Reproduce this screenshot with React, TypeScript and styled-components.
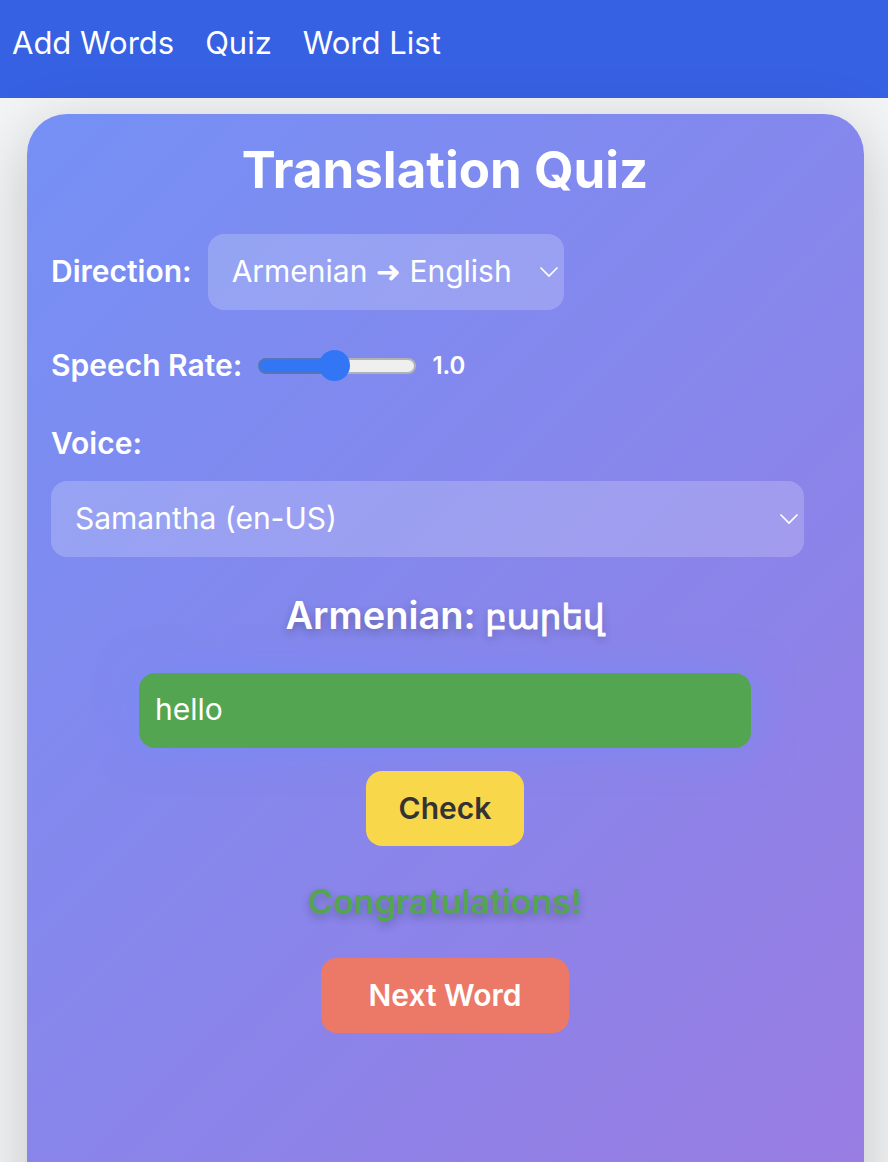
import React, { useState } from "react";
import styled, { createGlobalStyle } from "styled-components";

const GlobalStyle = createGlobalStyle`
  *, *::before, *::after { box-sizing: border-box; }
  body { margin: 0; background: #f3f4f6; }
  button, input, select { font: inherit; color: inherit; margin: 0; }
`;

const Page = styled.div`
  height: 100vh;
  overflow: hidden;
  color: #fff;
  font-family: Inter, "DejaVu Sans", sans-serif;
`;

const NavBar = styled.nav`
  display: flex;
  gap: 31px;
  height: 98px;
  padding: 23px 12px;
  background: #3761e3;
`;

const NavLink = styled.a`
  color: #fff;
  font-size: 31px;
  font-weight: 400;
  line-height: 40px;
  text-decoration: none;
`;

const Main = styled.main`
  padding: 16px 24px 0 27px;
`;

const Card = styled.section`
  position: relative;
  min-height: 120vh;
  padding: 24px 25px 24px 24px;
  border-radius: 40px;
  background: linear-gradient(135deg, #7590f5, #9f79df);
  box-shadow: 0 16px 64px rgba(0, 0, 0, 0.2);
  display: flex;
  flex-direction: column;
`;

const Title = styled.h1`
  margin: 0 0 32px;
  font-size: 51px;
  font-weight: 700;
  line-height: 64px;
  text-align: center;
`;

const Row = styled.div<{ $gap: number }>`
  display: flex;
  align-items: center;
  gap: 16px;
  margin-bottom: ${(p) => p.$gap}px;
`;

const Label = styled.label`
  padding-bottom: 2px;
  font-size: 30px;
  font-weight: 600;
  line-height: 38px;
`;

const SelectWrap = styled.div<{ $wide?: boolean }>`
  position: relative;
  width: ${(p) => (p.$wide ? "calc(100% - 35px)" : "356px")};
`;

const Select = styled.select`
  appearance: none;
  display: block;
  width: 100%;
  height: 76px;
  padding: 0 24px 2px;
  border: 0;
  border-radius: 16px;
  background: rgba(255, 255, 255, 0.2);
  font-size: 30px;
  font-weight: 400;
  outline: none;
`;

const Chevron = styled.svg`
  position: absolute;
  right: 5px;
  top: 32px;
  width: 20px;
  height: 12px;
  pointer-events: none;
`;

const Slider = styled.input`
  appearance: none;
  width: 158px;
  height: 32px;
  background: transparent;
  outline: none;

  &::-webkit-slider-runnable-track {
    height: 16px;
    border: 2px solid rgba(118, 118, 118, 0.5);
    border-radius: 8px;
    background: linear-gradient(90deg, #3276f6 48%, #efefef 48%) border-box;
  }

  &::-webkit-slider-thumb {
    appearance: none;
    width: 31px;
    height: 31px;
    margin-top: -10px;
    border-radius: 50%;
    background: #3276f6;
  }
`;

const Rate = styled.output`
  font-size: 24px;
  font-weight: 600;
  line-height: 40px;
`;

const Prompt = styled.h2`
  margin: 32px 0;
  font-size: 38px;
  font-weight: 600;
  line-height: 52px;
  text-align: center;
  text-shadow: 0 4px 8px rgba(0, 0, 0, 0.25);
`;

const Word = styled.span`
  font-family: "DejaVu Sans", sans-serif;
  font-size: 34px;
  font-weight: 400;
  line-height: 1;
  -webkit-text-stroke: 1px #fff;
`;

const Answer = styled.input`
  align-self: center;
  width: 612px;
  max-width: 100%;
  height: 75px;
  margin-bottom: 23px;
  padding: 0 16px 4px;
  border: 0;
  border-radius: 16px;
  background: #54a552;
  box-shadow: 0 0 40px rgba(110, 142, 251, 0.6);
  font-size: 30px;
  font-weight: 400;
  outline: none;
`;

const Action = styled.button<{ $tone: "check" | "next" }>`
  align-self: center;
  height: 75px;
  padding: 0 0 2px;
  width: ${(p) => (p.$tone === "check" ? 158 : 248)}px;
  border: 0;
  border-radius: 16px;
  background: ${(p) => (p.$tone === "check" ? "#f8d74a" : "#ec7868")};
  color: ${(p) => (p.$tone === "check" ? "#333" : "#fff")};
  font-size: 30px;
  font-weight: 600;
  cursor: pointer;
`;

const Feedback = styled.p`
  margin: 32px 0;
  color: #54a552;
  font-size: 34px;
  font-weight: 600;
  line-height: 48px;
  text-align: center;
  text-shadow: 0 4px 8px rgba(0, 0, 0, 0.25);
`;

const DownIcon = () => (
  <Chevron viewBox="0 0 20 12" fill="none" stroke="#fff" strokeWidth="1.7" aria-hidden="true">
    <path d="M1.5 1.5 10 10 18.5 1.5" />
  </Chevron>
);

export default function App() {
  const [rate, setRate] = useState(1);
  const [answer, setAnswer] = useState("hello");

  return (
    <Page>
      <GlobalStyle />
      <NavBar>
        <NavLink href="#add">Add Words</NavLink>
        <NavLink href="#quiz">Quiz</NavLink>
        <NavLink href="#list">Word List</NavLink>
      </NavBar>
      <Main>
        <Card>
          <Title>Translation Quiz</Title>
          <Row $gap={36}>
            <Label htmlFor="direction">Direction:</Label>
            <SelectWrap>
              <Select id="direction">
                <option>Armenian ➜ English</option>
                <option>English ➜ Armenian</option>
              </Select>
              <DownIcon />
            </SelectWrap>
          </Row>
          <Row $gap={38}>
            <Label htmlFor="rate">Speech Rate:</Label>
            <Slider
              id="rate"
              type="range"
              min={0.1}
              max={2}
              step={0.1}
              value={rate}
              onChange={(e) => setRate(Number(e.target.value))}
            />
            <Rate htmlFor="rate">{rate.toFixed(1)}</Rate>
          </Row>
          <Row $gap={17}>
            <Label htmlFor="voice">Voice:</Label>
          </Row>
          <SelectWrap $wide>
            <Select id="voice">
              <option>Samantha (en-US)</option>
            </Select>
            <DownIcon />
          </SelectWrap>
          <Prompt>
            Armenian: <Word lang="hy">բարեվ</Word>
          </Prompt>
          <Answer aria-label="Translation" value={answer} onChange={(e) => setAnswer(e.target.value)} />
          <Action type="button" $tone="check">Check</Action>
          <Feedback>Congratulations!</Feedback>
          <Action type="button" $tone="next">Next Word</Action>
        </Card>
      </Main>
    </Page>
  );
}
